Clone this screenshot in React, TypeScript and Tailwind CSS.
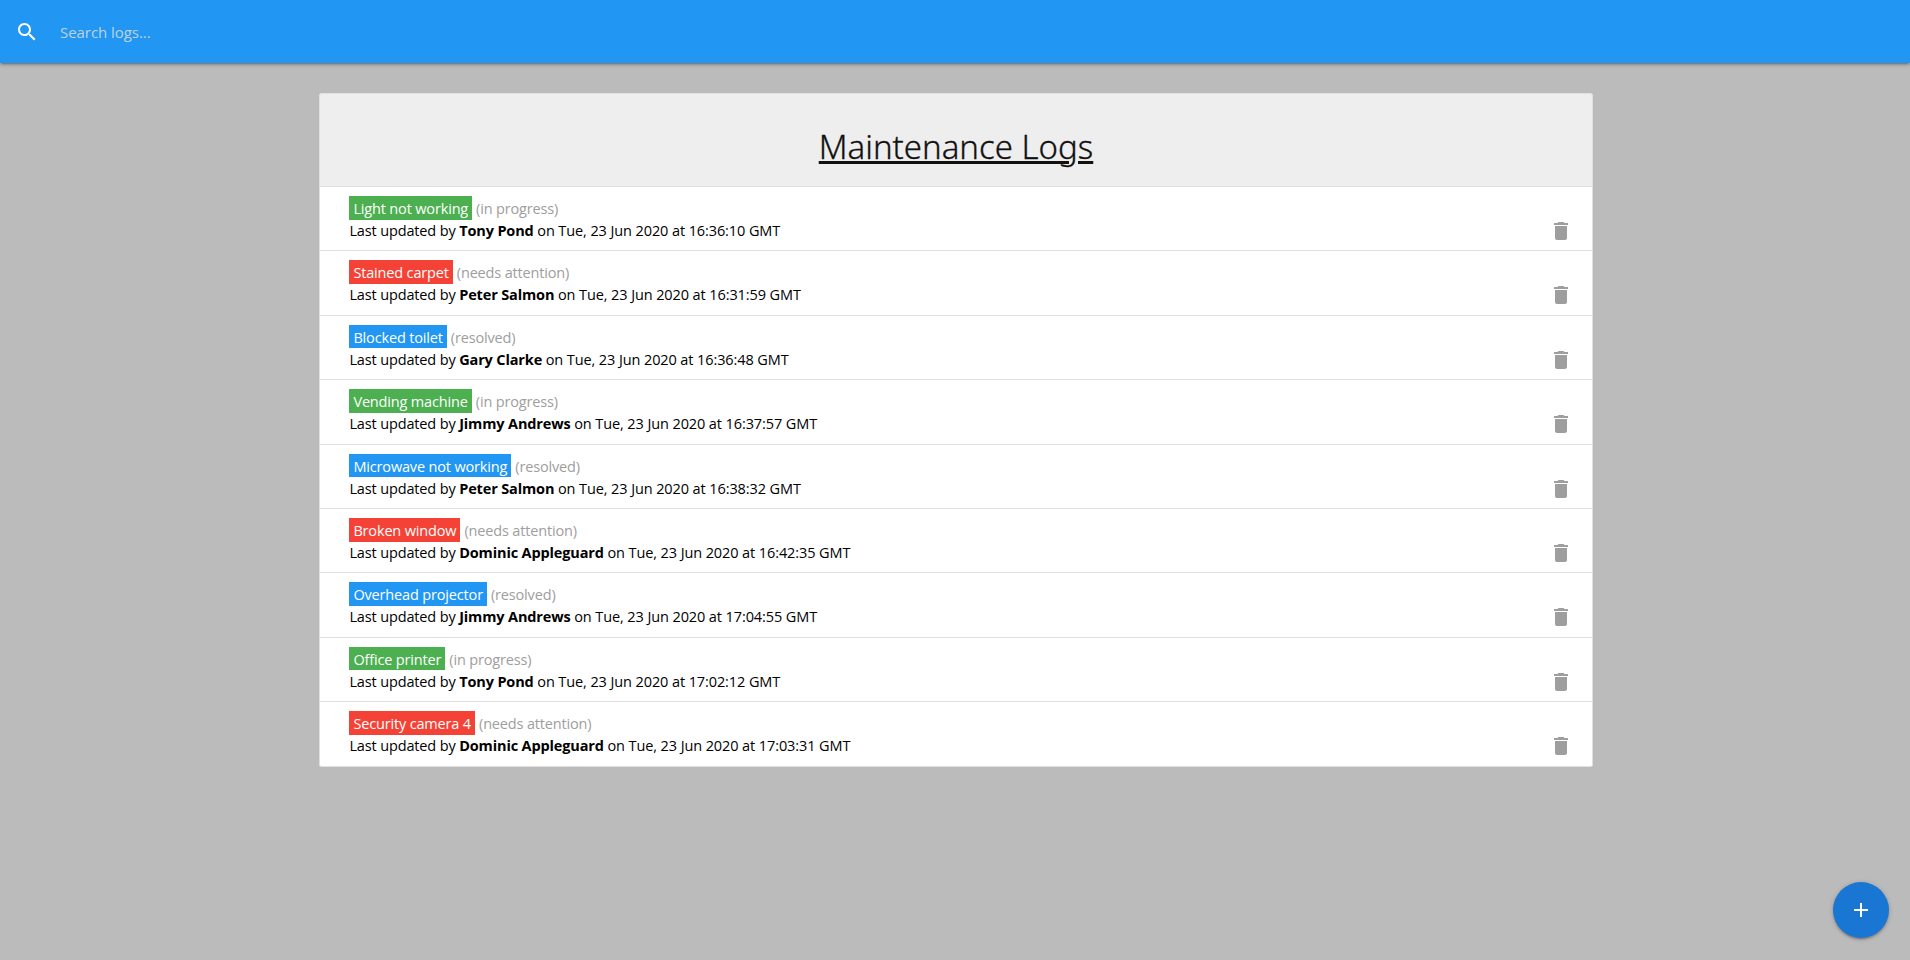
type Status = "in progress" | "needs attention" | "resolved";

interface Log {
  title: string;
  status: Status;
  tech: string;
  time: string;
}

const LOGS: Log[] = [
  { title: "Light not working", status: "in progress", tech: "Tony Pond", time: "16:36:10" },
  { title: "Stained carpet", status: "needs attention", tech: "Peter Salmon", time: "16:31:59" },
  { title: "Blocked toilet", status: "resolved", tech: "Gary Clarke", time: "16:36:48" },
  { title: "Vending machine", status: "in progress", tech: "Jimmy Andrews", time: "16:37:57" },
  { title: "Microwave not working", status: "resolved", tech: "Peter Salmon", time: "16:38:32" },
  { title: "Broken window", status: "needs attention", tech: "Dominic Appleguard", time: "16:42:35" },
  { title: "Overhead projector", status: "resolved", tech: "Jimmy Andrews", time: "17:04:55" },
  { title: "Office printer", status: "in progress", tech: "Tony Pond", time: "17:02:12" },
  { title: "Security camera 4", status: "needs attention", tech: "Dominic Appleguard", time: "17:03:31" },
];

const TAG: Record<Status, string> = {
  "in progress": "bg-[#4caf50]",
  "needs attention": "bg-[#f44336]",
  resolved: "bg-[#2196f3]",
};

function Icon({ d, className }: { d: string; className: string }) {
  return (
    <svg viewBox="0 0 24 24" className={`size-6 fill-current ${className}`}>
      <path d={d} />
    </svg>
  );
}

const SEARCH =
  "M15.5 14h-.79l-.28-.27C15.41 12.59 16 11.11 16 9.5 16 5.91 13.09 3 9.5 3S3 5.91 3 9.5 5.91 16 9.5 16c1.61 0 3.09-.59 4.23-1.57l.27.28v.79l5 4.99L20.49 19l-4.99-5zm-6 0C7.01 14 5 11.99 5 9.5S7.01 5 9.5 5 14 7.01 14 9.5 11.99 14 9.5 14z";
const TRASH = "M6 19c0 1.1.9 2 2 2h8c1.1 0 2-.9 2-2V7H6v12zM19 4h-3.5l-1-1h-5l-1 1H5v2h14V4z";
const PLUS = "M19 13h-6v6h-2v-6H5v-2h6V5h2v6h6v2z";

function LogItem({ log }: { log: Log }) {
  return (
    <li className="flex h-[64.4px] items-start justify-between border-b border-[#e0e0e0] bg-white pt-[9px] pr-[19.5px] pl-[29.4px] text-[14.5px] last:h-[63.4px] last:border-b-0">
      <div>
        <div className="flex items-start leading-[26px] tracking-[-0.16px]">
          <a href="#" className={`h-[23.6px] px-1 text-white ${TAG[log.status]}`}>
            {log.title}
          </a>
          <span className="ml-[4px] text-[#9e9e9e]">({log.status})</span>
        </div>
        <div className="leading-[18px] tracking-[-0.14px] text-black">
          Last updated by <b className="font-bold">{log.tech}</b>
          <span className="tracking-[-0.1px]"> on Tue, 23 Jun 2020 at {log.time} GMT</span>
        </div>
      </div>
      <button aria-label="Delete log" className="mt-[23px] text-[#9e9e9e]">
        <Icon d={TRASH} className="block" />
      </button>
    </li>
  );
}

export default function App() {
  return (
    <div className="flex h-screen flex-col bg-[#bbbbbb] font-['Open_Sans',sans-serif]">
      <nav className="flex h-[63px] shrink-0 items-center bg-[#2196f3] pl-[15px] text-white shadow-[0_2px_2px_0_rgba(0,0,0,0.14),0_3px_1px_-2px_rgba(0,0,0,0.12),0_1px_5px_0_rgba(0,0,0,0.2)]">
        <Icon d={SEARCH} className="" />
        <input
          type="search"
          placeholder="Search logs..."
          className="ml-[21px] h-full grow bg-transparent pt-px text-[15px] tracking-[-0.05px] outline-none placeholder:text-[#bfd3e4]"
        />
      </nav>
      <main className="flex grow justify-center pt-[30px] pl-[2px]">
        <ul className="w-[1274px] self-start overflow-hidden rounded-[2px] border border-[#e0e0e0]">
          <li className="flex h-[93px] justify-center border-b border-[#e0e0e0] bg-[#eeeeee] pt-[31px]">
            <h4 className="font-['Noto_Sans',sans-serif] text-[33px] leading-[44px] font-light text-[#111] underline decoration-[3px] underline-offset-[2px] [-webkit-text-stroke:0.3px_#111]">
              Maintenance Logs
            </h4>
          </li>
          {LOGS.map((log) => (
            <LogItem key={log.title} log={log} />
          ))}
        </ul>
      </main>
      <button
        aria-label="Add log"
        className="fixed right-[21px] bottom-[22.5px] flex size-14 items-center justify-center rounded-full bg-[#1976d2] text-white shadow-[0_2px_2px_0_rgba(0,0,0,0.14),0_3px_1px_-2px_rgba(0,0,0,0.12),0_1px_5px_0_rgba(0,0,0,0.2)]"
      >
        <Icon d={PLUS} className="" />
      </button>
    </div>
  );
}
